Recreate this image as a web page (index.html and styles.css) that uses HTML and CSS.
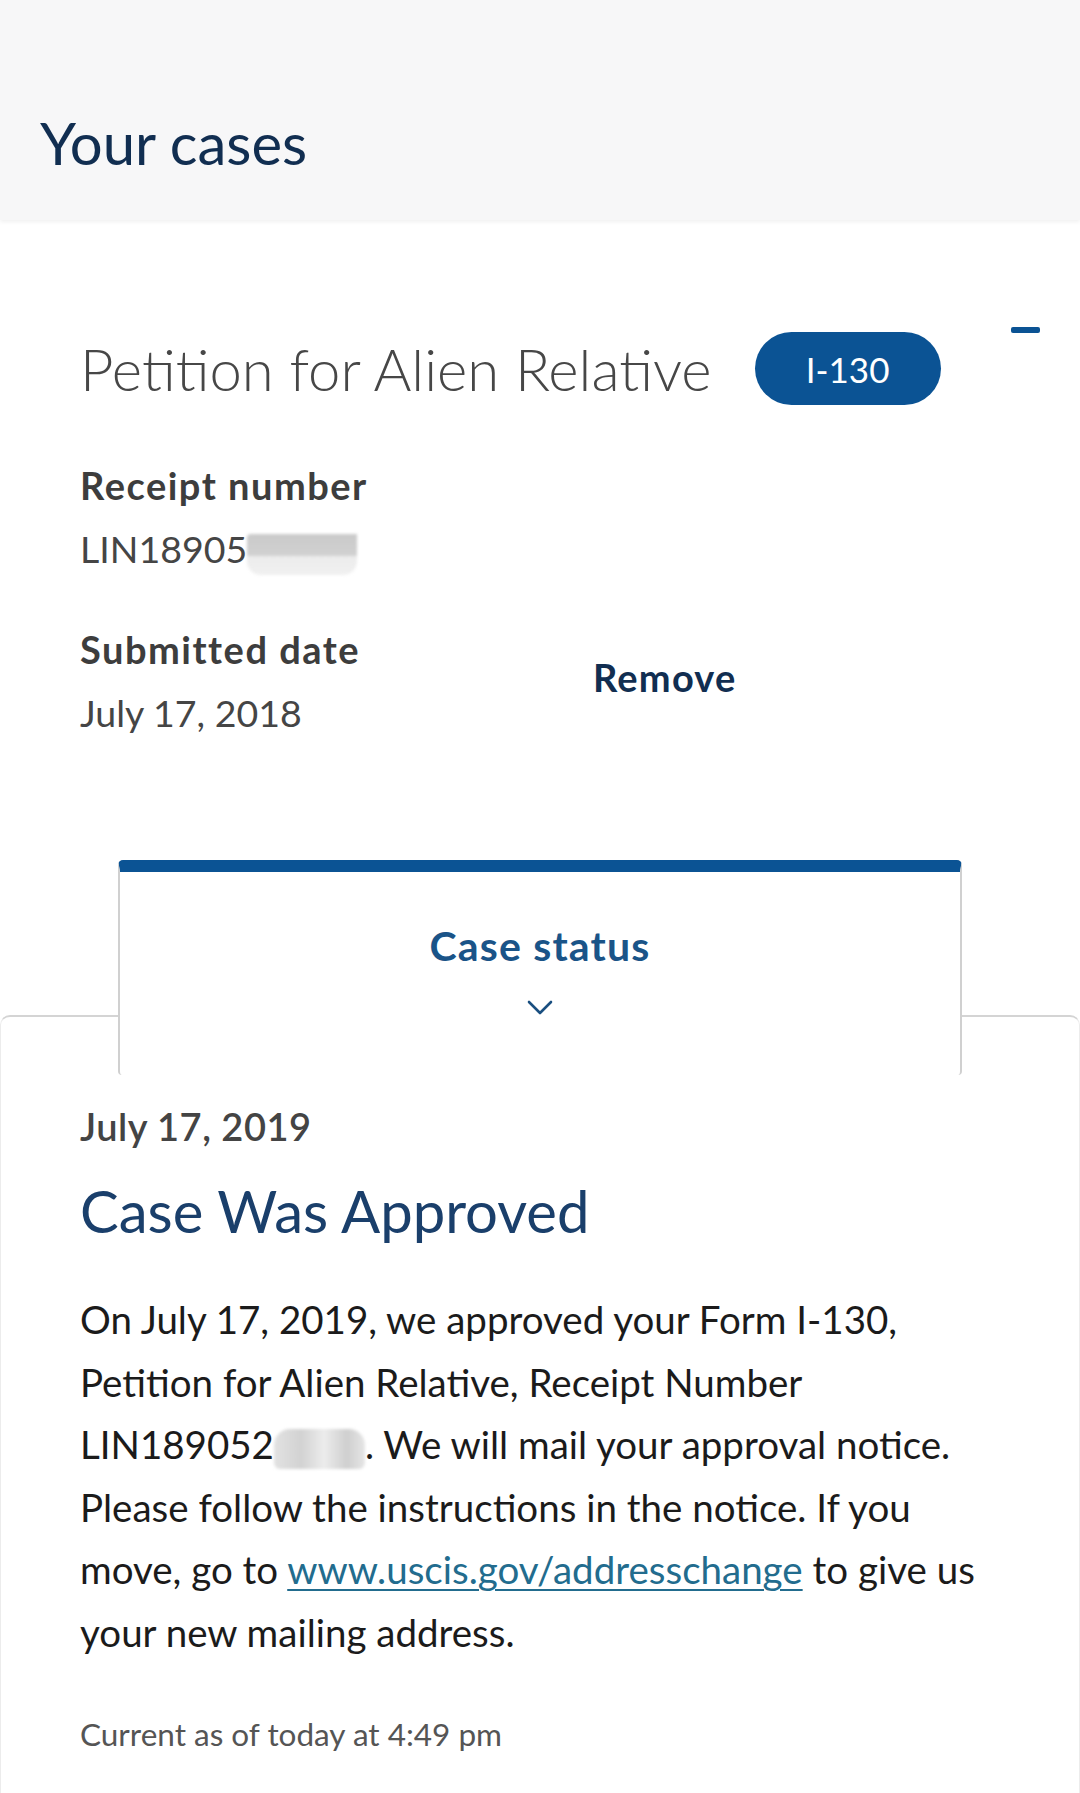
FILE: index.html
```html
<!DOCTYPE html>
<html lang="en">
<head>
    <meta charset="UTF-8">
    <meta name="viewport" content="width=device-width, initial-scale=1.0">
    <title>Your cases</title>
    <link rel="stylesheet" href="styles.css">
</head>
<body>
    <header class="page-header">
        <h1>Your cases</h1>
    </header>

    <main class="case">
        <section class="case-summary">
            <div class="case-head">
                <h2 class="case-title">Petition for Alien Relative</h2>
                <span class="form-badge">I-130</span>
                <button class="collapse" aria-label="Collapse case"><span></span></button>
            </div>

            <dl class="case-field">
                <dt>Receipt number</dt>
                <dd>LIN18905<span class="redact"></span></dd>
            </dl>

            <div class="case-row">
                <dl class="case-field">
                    <dt>Submitted date</dt>
                    <dd>July 17, 2018</dd>
                </dl>
                <a class="remove" href="#">Remove</a>
            </div>
        </section>

        <div class="status-tab">
            <span class="status-tab-label">Case status</span>
            <svg class="chevron" width="26" height="15" viewBox="0 0 26 15" aria-hidden="true">
                <path d="M2 2 L13 13 L24 2" fill="none" stroke="currentColor" stroke-width="2.6" stroke-linecap="round" stroke-linejoin="round"/>
            </svg>
        </div>

        <section class="status-panel">
            <p class="status-date">July 17, 2019</p>
            <h3 class="status-title">Case Was Approved</h3>
            <p class="status-text">On July 17, 2019, we approved your Form I-130, Petition for Alien Relative, Receipt Number <span class="receipt">LIN189052<span class="redact redact-inline"></span>.</span> We will mail your approval notice. Please follow the instructions in the notice. If you move, go to <a href="#">www.uscis.gov/addresschange</a> to give us your new mailing address.</p>
            <p class="status-updated">Current as of today at 4:49 pm</p>
        </section>
    </main>
</body>
</html>
```

FILE: styles.css
```css
body {
    font-family: Lato, "Source Sans Pro", "Open Sans", sans-serif;
    margin: 0;
    padding: 0;
    background-color: #fff;
    color: #1b1b1b;
}

.page-header {
    background-color: #f7f7f8;
    padding: 108px 40px 42px;
    box-shadow: 0 2px 4px rgba(0,0,0,0.06);
    position: relative;
}

.page-header h1 {
    margin: 0;
    font-size: 58px;
    line-height: 70px;
    font-weight: 400;
    color: #112e51;
}

/* top part of the case card */
.case-summary {
    padding: 112px 40px 0 80px;
}

.case-head {
    display: flex;
    align-items: center;
}

.case-title {
    margin: 0 43px 0 0;
    font-size: 58px;
    line-height: 70px;
    font-weight: 300;
    color: #474747;
}

.form-badge {
    display: inline-flex;
    align-items: center;
    justify-content: center;
    width: 186px;
    height: 73px;
    border-radius: 37px;
    background-color: #0b5394;
    color: #fff;
    font-size: 35px;
}

.collapse {
    margin: -10px 0 0 auto;
    align-self: flex-start;
    width: 29px;
    height: 16px;
    padding: 0;
    border: 0;
    background: none;
}

.collapse span {
    display: block;
    height: 6px;
    border-radius: 2px;
    background-color: #0b5394;
}

.case-field {
    margin: 49px 0 0;
}

.case-field dt,
.case-field dd {
    margin: 0;
    font-size: 37.5px;
    line-height: 63px;
    color: #454545;
}

.case-field dt {
    font-size: 38px;
    letter-spacing: 1.5px;
    font-weight: 700;
    color: #3d3d3d;
}

.case-row {
    display: flex;
    align-items: center;
    margin-top: 38px;
}

.case-row .case-field {
    margin: 0;
    width: 513px;
}

.remove {
    margin-bottom: 9px;
    font-size: 38px;
    letter-spacing: 1.2px;
    font-weight: 700;
    color: #112e51;
    text-decoration: none;
}

/* blurred-out parts of the receipt number */
.redact {
    display: inline-block;
    width: 110px;
    height: 41px;
    vertical-align: -12px;
    border-radius: 4px 0 14px 14px;
    background: linear-gradient(to bottom, #cacaca 0, #d0d0d0 52%, #ececec 55%, #f0f0f0 100%);
    filter: blur(1.5px);
}

.receipt {
    white-space: nowrap;
}

.redact-inline {
    width: 91px;
    height: 40px;
    vertical-align: -10px;
    border-radius: 16px 16px 6px 6px;
    background: linear-gradient(to right, #e2e2e2 0, #d2d2d2 30%, #ececec 55%, #cfcfcf 80%, #e6e6e6 100%);
}

/* tab that sits on the status panel */
.status-tab {
    position: relative;
    z-index: 1;
    margin: 116px 118px -60px;
    height: 215px;
    padding-top: 49px;
    box-sizing: border-box;
    border-top: 12px solid #0b5394;
    border-left: 2px solid #d0d0d0;
    border-right: 2px solid #d0d0d0;
    border-radius: 5px 5px 4px 4px;
    background-color: #fff;
    text-align: center;
    color: #1a5488;
}

.status-tab-label {
    display: block;
    font-size: 41px;
    letter-spacing: 1.2px;
    line-height: 50px;
    font-weight: 700;
}

.chevron {
    display: block;
    margin: 29px auto 0;
    color: #1a4f80;
}

.status-panel {
    border-top: 2px solid #d4d4d4;
    border-left: 1px solid #ececec;
    border-right: 1px solid #ececec;
    border-radius: 10px 10px 0 0;
    padding: 84px 60px 80px 79px;
}

.status-date {
    margin: 0;
    font-size: 38px;
    letter-spacing: 0.5px;
    line-height: 50px;
    font-weight: 600;
    color: #444;
}

.status-title {
    margin: 25px 0 0;
    font-size: 58px;
    line-height: 70px;
    font-weight: 400;
    color: #1a3f6b;
}

.status-text {
    margin: 42px 0 0;
    font-size: 38.5px;
    line-height: 62.5px;
    color: #1b1b1b;
}

.status-text a {
    color: #226c8e;
    text-decoration: underline;
    text-underline-offset: 5px;
    text-decoration-thickness: 2px;
}

.status-updated {
    margin: 51px 0 0;
    font-size: 31.5px;
    line-height: 40px;
    color: #555;
}
```
